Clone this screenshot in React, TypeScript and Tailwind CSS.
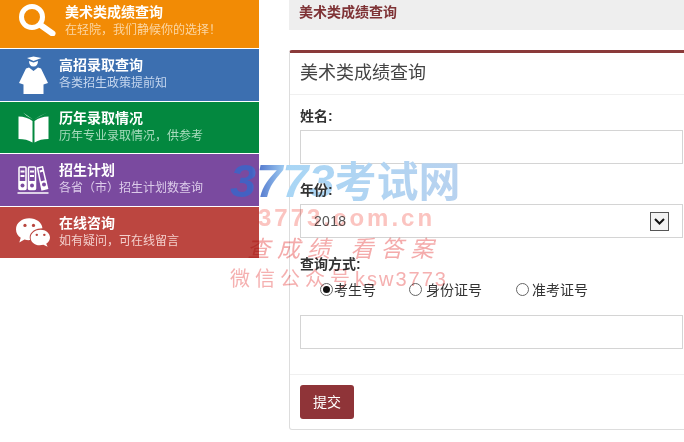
import { ReactNode } from 'react';

const font = { fontFamily: '"Liberation Sans", "Noto Sans CJK SC", sans-serif' };

function SearchIcon() {
  return (
    <svg width="37" height="33" viewBox="0 0 37 33" fill="none" stroke="#fff">
      <circle cx="13" cy="14" r="10.500" strokeWidth="5" />
      <path d="M21.500 22 L33.500 30.500" strokeWidth="6" strokeLinecap="round" />
    </svg>
  );
}

function GradIcon() {
  return (
    <svg width="29" height="38" viewBox="0 0 29 38" fill="#fff">
      <path d="M8 2 L14.500 0.500 L22.500 2 L14.500 5 Z" />
      <path d="M10 5 L14.500 6.500 L19 5 C19 8.500 17.500 10.500 14.500 10.500 C11.500 10.500 10 8.500 10 5 Z" />
      <path d="M10 11.500 L14.500 15 L19 11.500 L22 12.500 L29 27 L24.500 28.500 L24.500 38 L4.500 38 L4.500 28.500 L0 27 L7 12.500 Z" />
    </svg>
  );
}

function BookIcon() {
  return (
    <svg width="31" height="31" viewBox="0 0 31 31" fill="#fff">
      <path d="M0.500 4.500 C6 4.500 10.500 6 14.500 9 L14.500 30.500 C10.500 28 6 27 0.500 27 Z" />
      <path d="M30.500 4.500 C25 4.500 20.500 6 16.500 9 L16.500 30.500 C20.500 28 25 27 30.500 27 Z" />
      <path d="M9 4 L5 0.500 L15 7.500 Z M22 4 L29 0.500 L16 7.500 Z" />
    </svg>
  );
}

function BindersIcon() {
  return (
    <svg width="32" height="28" viewBox="0 0 32 28" fill="none">
      <path d="M0.500 27 L31.500 27" stroke="#fff" strokeWidth="1.500" />
      <g fill="none" stroke="#fff" strokeWidth="1.500">
        <rect x="2" y="1" width="7" height="22.500" rx="1" />
        <rect x="11.500" y="1" width="7" height="22.500" rx="1" />
        <path d="M20.500 2 L25.500 0.800 L30.500 22.500 L25 23.800 Z" />
      </g>
      <g fill="#fff">
        <rect x="2" y="15" width="7" height="8.500" />
        <rect x="11.500" y="15" width="7" height="8.500" />
        <path d="M23.500 15.500 L29 14 L30.500 22.500 L25 23.800 Z" />
        <path d="M3.500 4.500 h4 v2 h-4 Z M3.500 9 h4 v2 h-4 Z M13 4.500 h4 v2 h-4 Z M13 9 h4 v2 h-4 Z M22.500 4.500 l3.500 -1 l0.500 2 l-3.500 1 Z" />
      </g>
      <g fill="#7a4a9f">
        <circle cx="5.500" cy="19.500" r="2" />
        <circle cx="15" cy="19.500" r="2" />
        <circle cx="27" cy="18.500" r="2" />
      </g>
    </svg>
  );
}

function ChatIcon() {
  return (
    <svg width="36" height="29" viewBox="0 0 36 30">
      <path fill="#fff" d="M14 0 C21.500 0 27.500 4.500 28 10.500 C21.500 10.500 14.500 14 14.500 20 C14.500 21 14.700 22 15 23 C13 23.200 11 23 9 22.400 L3.500 25.500 L5 20.500 C2 18.500 0 15.500 0 11.500 C0 5 6.300 0 14 0 Z" />
      <path fill="#fff" d="M26 12 C31.500 12 36 15.700 36 20.200 C36 23 34.500 25 32 26.800 L33.500 30 L29 28 C21.500 30 15.500 26 15.500 20.200 C15.500 15.700 20.500 12 26 12 Z" />
      <g fill="#b9463f">
        <circle cx="9.500" cy="7.500" r="1.700" />
        <circle cx="18.500" cy="7.500" r="1.700" />
        <circle cx="22" cy="17.500" r="1.300" />
        <circle cx="30" cy="17.500" r="1.300" />
      </g>
    </svg>
  );
}

interface NavRow {
  title: string;
  sub: string;
  icon: ReactNode;
  rowClass: string;
  subClass: string;
}

const rows: NavRow[] = [
  { title: '高招录取查询', sub: '各类招生政策提前知', icon: <GradIcon />, rowClass: 'bg-[#3c6fb0] h-[52px]', subClass: 'text-[#c5d6ee]' },
  { title: '历年录取情况', sub: '历年专业录取情况，供参考', icon: <BookIcon />, rowClass: 'bg-[#03883f] h-[51px]', subClass: 'text-[#a8dcbd]' },
  { title: '招生计划', sub: '各省（市）招生计划数查询', icon: <BindersIcon />, rowClass: 'bg-[#7a4a9f] h-[52px]', subClass: 'text-[#dccbea]' },
  { title: '在线咨询', sub: '如有疑问，可在线留言', icon: <ChatIcon />, rowClass: 'bg-[#bc4640] h-[51px]', subClass: 'text-[#f3cfcc]' },
];

function Watermark() {
  return (
    <div className="absolute left-[230px] top-[156px] w-[240px] pointer-events-none select-none">
      <div className="h-[50px] leading-[50px] whitespace-nowrap bg-gradient-to-r from-[#4361c2] from-[9%] via-[#a9d6f5] via-[24%] to-[#b9d2ef] bg-clip-text text-transparent font-bold">
        <span className="text-[47px] italic">3773</span>
        <span className="text-[42px]">考试网</span>
      </div>
      <div className="mix-blend-multiply">
        <div className="ml-[28px] -mt-[1px] text-[24px] leading-[26px] tracking-[3px] font-bold whitespace-nowrap text-[#fbc4c0]">
          3773.com.cn
        </div>
        <div className="ml-[17px] mt-[4px] text-[23px] leading-[28px] tracking-[7px] whitespace-nowrap italic text-[#f4abab]">
          查成绩 看答案
        </div>
        <div className="mt-[4px] text-[20px] leading-[24px] tracking-[5px] whitespace-nowrap text-[#f5b0b0]">
          微信公众号<span className="tracking-[2px]">ksw3773</span>
        </div>
      </div>
    </div>
  );
}

const inputClass = 'block w-[383px] h-[34px] border border-[#d4d4d4] bg-white';

function RadioOption({ label, checked, className }: { label: string; checked?: boolean; className: string }) {
  return (
    <label className={`flex items-center ${className}`}>
      <span className="flex items-center justify-center w-[13px] h-[13px] rounded-full border border-[#666] bg-white mb-[2px]">
        {checked && <span className="w-[7px] h-[7px] rounded-full bg-[#111]" />}
      </span>
      <span>{label}</span>
    </label>
  );
}

export default function App() {
  return (
    <div className="relative flex w-[684px] h-[442px] overflow-hidden bg-white text-[#333]" style={font}>
      {/* left nav */}
      <div className="w-[259px] shrink-0 flex flex-col">
        <div className="flex items-center h-[48px] bg-[#f28b05] mb-[1px] pl-[19px] pb-[9px]">
          <SearchIcon />
          <div className="ml-[9px] pt-[3px]">
            <div className="text-[14px] leading-[18px] font-bold text-white">美术类成绩查询</div>
            <div className="text-[12px] leading-[18px] text-[#fbd6a4]">在轻院，我们静候你的选择！</div>
          </div>
        </div>
        {rows.map((row) => (
          <div key={row.title} className={`flex items-center mb-[1px] ${row.rowClass}`}>
            <div className="w-[59px] flex justify-center pl-[16px] pr-[9px] shrink-0">{row.icon}</div>
            <div className="pb-[2px]">
              <div className="text-[14px] leading-[18px] font-bold text-white">{row.title}</div>
              <div className={`text-[12px] leading-[18px] ${row.subClass}`}>{row.sub}</div>
            </div>
          </div>
        ))}
      </div>

      {/* main */}
      <div className="ml-[30px] flex-1 min-w-0">
        <div className="h-[30px] bg-[#eeeeee] pl-[10px] text-[14px] leading-[25px] font-bold text-[#7f3336]">
          美术类成绩查询
        </div>
        <div className="mt-[20px] w-[400px] h-[380px] rounded-[3px] border border-[#dddddd] border-t-[3px] border-t-[#8a3a3a]">
          <div className="h-[42px] pl-[10px] text-[18px] leading-[40px] text-[#444] border-b border-[#f0f0f0]">
            美术类成绩查询
          </div>
          <div className="px-[10px] pt-[12px] h-[280px] border-b border-[#f0f0f0]">
            <div className="text-[14px] leading-[18px] font-bold">姓名:</div>
            <div className={`mt-[5px] ${inputClass}`} />
            <div className="relative z-10 mt-[17px] text-[14px] leading-[18px] font-bold">年份:</div>
            <div className={`mt-[5px] relative flex items-center pl-[13px] text-[14px] tracking-[0.300px] text-[#555] ${inputClass}`}>
              2018
              <span className="absolute right-[13px] top-[7px] flex items-center justify-center w-[19px] h-[19px] border border-[#555] bg-[#f3f3f3]">
                <svg width="11" height="7" viewBox="0 0 11 7" fill="none" stroke="#111" strokeWidth="2">
                  <path d="M1 1 L5.500 5.500 L10 1" />
                </svg>
              </span>
            </div>
            <div className="mt-[17px] text-[14px] leading-[18px] font-bold">查询方式:</div>
            <div className="flex mt-[7px] h-[20px] text-[14px]">
              <RadioOption label="考生号" checked className="ml-[20px] gap-[1px]" />
              <RadioOption label="身份证号" className="ml-[33px] gap-[4px]" />
              <RadioOption label="准考证号" className="ml-[34px] gap-[3px]" />
            </div>
            <div className={`mt-[15px] ${inputClass}`} />
          </div>
          <div className="pl-[10px] pt-[10px]">
            <button className="w-[54px] h-[34px] rounded-[3px] bg-[#8f3438] text-white text-[14px]">提交</button>
          </div>
        </div>
      </div>

      <Watermark />
    </div>
  );
}
